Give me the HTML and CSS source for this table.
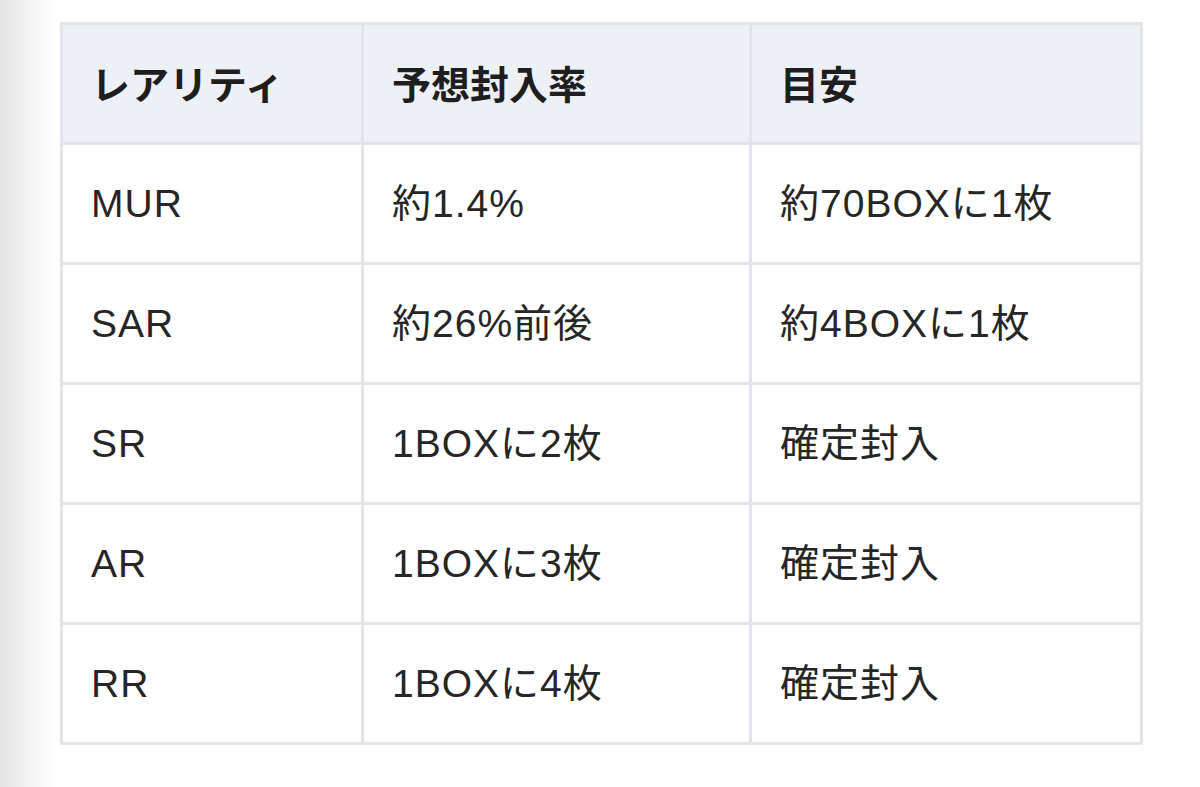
FILE: index.html
```html
<!DOCTYPE html>
<html lang="ja">
<head>
<meta charset="utf-8">
<title>封入率</title>
<link rel="stylesheet" href="styles.css">
</head>
<body>
<div class="page">
  <table class="rates">
    <colgroup>
      <col class="c1"><col class="c2"><col class="c3">
    </colgroup>
    <thead>
      <tr><th>レアリティ</th><th>予想封入率</th><th>目安</th></tr>
    </thead>
    <tbody>
      <tr><td>MUR</td><td>約1.4%</td><td>約70BOXに1枚</td></tr>
      <tr><td>SAR</td><td>約26%前後</td><td>約4BOXに1枚</td></tr>
      <tr><td>SR</td><td>1BOXに2枚</td><td>確定封入</td></tr>
      <tr><td>AR</td><td>1BOXに3枚</td><td>確定封入</td></tr>
      <tr><td>RR</td><td>1BOXに4枚</td><td>確定封入</td></tr>
    </tbody>
  </table>
</div>
</body>
</html>
```

FILE: styles.css
```css
html, body {
  margin: 0;
  padding: 0;
}
body {
  width: 1200px;
  height: 787px;
  overflow: hidden;
  background: linear-gradient(to right, #e4e4e4 0px, #f3f3f3 28px, #ffffff 56px);
  font-family: "Liberation Sans", "Noto Sans CJK JP", sans-serif;
  color: #222222;
}
.page {
  padding: 22px 0 0 60px;
}
.rates {
  border-collapse: collapse;
  table-layout: fixed;
  width: 1080px;
  background: #ffffff;
  border: 3px solid #e3e3e9;
}
.rates .c1 { width: 301px; }
.rates .c2 { width: 388px; }
.rates .c3 { width: 391px; }
.rates tr {
  height: 120px;
}
.rates th,
.rates td {
  border: 3px solid #e3e3e9;
  padding: 0 0 0 28px;
  text-align: left;
  vertical-align: middle;
  line-height: 1;
}
.rates th {
  background: #edf0f5;
  font-family: "Noto Sans CJK JP", sans-serif;
  font-weight: 700;
  color: #1e1e1e;
  font-size: 39px;
  padding-bottom: 2px;
}
.rates td {
  font-weight: 400;
  color: #262626;
  font-size: 39px;
  letter-spacing: 1px;
}
```
